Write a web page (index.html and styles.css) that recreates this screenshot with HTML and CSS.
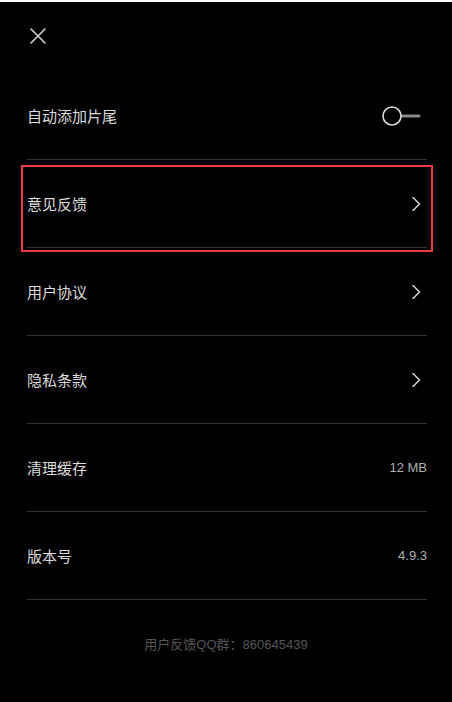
FILE: index.html
```html
<!DOCTYPE html>
<html lang="zh-CN">
<head>
<meta charset="utf-8">
<title>设置</title>
<link rel="stylesheet" href="styles.css">
</head>
<body>
<div class="app">
  <header class="header">
    <svg class="close" width="16" height="16" viewBox="0 0 16 16" aria-label="关闭">
      <path d="M1 1 L15 15 M15 1 L1 15" stroke="#d0d0d0" stroke-width="1.6" fill="none" stroke-linecap="round"/>
    </svg>
  </header>
  <ul class="list">
    <li class="row">
      <span class="label">自动添加片尾</span>
      <svg class="toggle" width="40" height="22" viewBox="0 0 40 22">
        <line x1="21" y1="11" x2="38" y2="11" stroke="#8a8a8a" stroke-width="3" stroke-linecap="round"/>
        <circle cx="11" cy="11" r="9" stroke="#dcdcdc" stroke-width="1.6" fill="#000"/>
      </svg>
    </li>
    <li class="row highlighted">
      <span class="label">意见反馈</span>
      <svg class="chevron" width="10" height="16" viewBox="0 0 10 16">
        <path d="M2 1.5 L8.5 8 L2 14.5" stroke="#cfcfcf" stroke-width="1.6" fill="none" stroke-linecap="round" stroke-linejoin="round"/>
      </svg>
      <span class="mark"></span>
    </li>
    <li class="row">
      <span class="label">用户协议</span>
      <svg class="chevron" width="10" height="16" viewBox="0 0 10 16">
        <path d="M2 1.5 L8.5 8 L2 14.5" stroke="#cfcfcf" stroke-width="1.6" fill="none" stroke-linecap="round" stroke-linejoin="round"/>
      </svg>
    </li>
    <li class="row">
      <span class="label">隐私条款</span>
      <svg class="chevron" width="10" height="16" viewBox="0 0 10 16">
        <path d="M2 1.5 L8.5 8 L2 14.5" stroke="#cfcfcf" stroke-width="1.6" fill="none" stroke-linecap="round" stroke-linejoin="round"/>
      </svg>
    </li>
    <li class="row">
      <span class="label">清理缓存</span>
      <span class="value">12 MB</span>
    </li>
    <li class="row">
      <span class="label">版本号</span>
      <span class="value">4.9.3</span>
    </li>
  </ul>
  <p class="footer">用户反馈QQ群：860645439</p>
</div>
</body>
</html>
```
FILE: styles.css
```css
html, body {
  margin: 0;
  padding: 0;
  background: #000;
}

body {
  font-family: "Liberation Sans", "Noto Sans CJK SC", sans-serif;
  color: #dedede;
}

.app {
  width: 452px;
  min-height: 700px;
  border-top: 2px solid #fff;
  background: #000;
}

.header {
  height: 70px;
  box-sizing: border-box;
  padding: 26px 0 0 30px;
}

.close {
  display: block;
}

.list {
  list-style: none;
  margin: 0;
  padding: 0 25px 0 27px;
}

.row {
  position: relative;
  height: 86px;
  border-bottom: 1px solid #333;
  display: flex;
  align-items: center;
  justify-content: space-between;
  padding-top: 1px;
  box-sizing: content-box;
}

.label {
  font-family: "Noto Sans CJK SC", sans-serif;
  font-size: 15px;
  line-height: 20px;
  color: #dcdcdc;
}

.value {
  font-size: 13px;
  line-height: 18px;
  color: #b0b0b0;
}

.toggle {
  display: block;
  margin-right: 6px;
}

.chevron {
  display: block;
  margin-right: 6px;
}

.mark {
  position: absolute;
  left: -6px;
  right: -6px;
  top: 5px;
  bottom: -5px;
  border: 2px solid #ef3a3a;
  pointer-events: none;
}

.footer {
  margin: 35px 0 0;
  text-align: center;
  font-size: 13px;
  line-height: 20px;
  color: #555;
}
```
